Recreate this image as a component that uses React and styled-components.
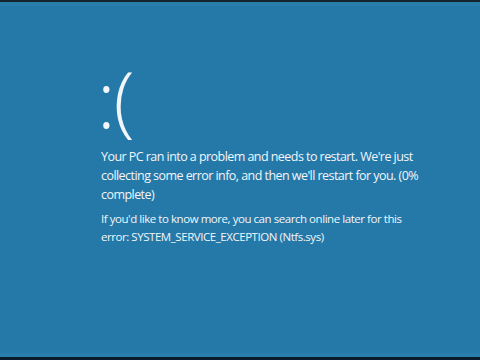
import React from "react";
import styled, { createGlobalStyle } from "styled-components";

const GlobalStyle = createGlobalStyle`
  html, body {
    margin: 0;
    padding: 0;
    background: #0b1622;
  }
  body {
    font-family: "Open Sans", "Noto Sans", sans-serif;
  }
`;

const message = [
  "Your PC ran into a problem and needs to restart. We're just",
  "collecting some error info, and then we'll restart for you. (0%",
  "complete)",
];

const details = [
  "If you'd like to know more, you can search online later for this",
  "error: SYSTEM_SERVICE_EXCEPTION (Ntfs.sys)",
];

export default function App() {
  return (
    <>
      <GlobalStyle />
      <Screen>
        <Letterbox />
        <Edge />
        <Content>
          <Face>:(</Face>
          <Message>
            {message.map((line) => (
              <Line key={line}>{line}</Line>
            ))}
          </Message>
          <Details>
            {details.map((line) => (
              <Line key={line}>{line}</Line>
            ))}
          </Details>
        </Content>
        <Edge />
        <Letterbox $bottom />
      </Screen>
    </>
  );
}

const Screen = styled.div`
  width: 480px;
  height: 360px;
  display: flex;
  flex-direction: column;
  background: #2479a9;
  overflow: hidden;
`;

const Letterbox = styled.div`
  height: ${(p) => (p.$bottom ? "3px" : "2px")};
  background: ${(p) => (p.$bottom ? "#0a1a2c" : "#15232f")};
`;

const Edge = styled.div`
  height: 4px;
  background: #2a7eac;
`;

const Content = styled.main`
  flex: 1;
  padding: 0 0 0 101px;
  color: #f2f6fa;
`;

const Face = styled.div`
  font-size: 78px;
  font-weight: 300;
  line-height: 78px;
  height: 76px;
  margin: 53px 0 0 -4px;
  letter-spacing: -2px;
`;

const Message = styled.div`
  margin: 12px 0 0;
  font-size: 12.5px;
  line-height: 19px;
  letter-spacing: -0.55px;
`;

const Details = styled.div`
  margin: 6px 0 0;
  font-size: 11.5px;
  line-height: 18px;
  letter-spacing: -0.45px;
`;

const Line = styled.div`
  white-space: nowrap;
`;
